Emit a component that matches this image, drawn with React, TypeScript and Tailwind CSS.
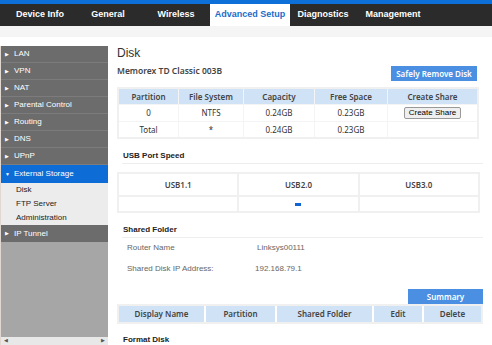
import React from "react";

const tabs = ["Device Info", "General", "Wireless", "Advanced Setup", "Diagnostics", "Management"];
const tabW = ["w-[68px]", "w-[68px]", "w-[68px]", "w-[80px]", "w-[66px]", "w-[74px]"];

const menu = ["LAN", "VPN", "NAT", "Parental Control", "Routing", "DNS", "UPnP"];

const Arrow = ({ down }: { down?: boolean }) => (
  <span className="inline-block w-[9px] text-[5px] leading-none">{down ? "▼" : "▶"}</span>
);

const App = () => {
  return (
    <div className="w-[492px] h-[345px] overflow-hidden bg-white font-['Liberation_Sans',sans-serif]">
      <div className="h-[4px] bg-[#0d6fd8]" />
      <div className="h-[22px] bg-[#2b2b2b] flex pl-[6px]">
        {tabs.map((t, i) => (
          <div
            key={t}
            className={`${tabW[i]} flex items-center justify-center text-[9px] font-bold ${
              t === "Advanced Setup" ? "bg-white text-[#1c6cc9]" : "text-white"
            }`}
          >
            {t}
          </div>
        ))}
      </div>
      <div className="h-[11px] bg-[#f5f5f5]" />
      <div className="flex pt-[9px]">
        <div className="w-[1px] shrink-0 bg-[#e0d8d0] h-[300px]" />
        <div className="w-[107px] shrink-0 h-[299px] flex flex-col bg-[#a6a6a6]">
          {menu.map((m) => (
            <div key={m} className="h-[17px] flex items-center pl-[4px] bg-[#6c6c6c] border-b border-[#7c7c7c] text-white text-[8px]">
              <Arrow />
              {m}
            </div>
          ))}
          <div className="h-[18px] flex items-center pl-[4px] bg-[#0d6cd6] text-white text-[8px]">
            <Arrow down />
            External Storage
          </div>
          <div className="bg-[#ececec] text-[#222] text-[8px] pl-[15px]">
            <div className="h-[14px] flex items-center">Disk</div>
            <div className="h-[14px] flex items-center">FTP Server</div>
            <div className="h-[14px] flex items-center">Administration</div>
          </div>
          <div className="h-[17px] flex items-center pl-[4px] bg-[#6c6c6c] text-white text-[8px]">
            <Arrow />
            IP Tunnel
          </div>
          <div className="flex-1" />
          <div className="h-[8px] bg-[#e8e8e8] flex items-center justify-between px-[3px] text-[5px] text-[#555]">
            <span>◀</span>
            <span>▶</span>
          </div>
        </div>

        <div className="flex-1 min-w-0 pl-[9px] pr-[9px] text-[#333]">
          <div className="text-[12px] leading-none mt-[1px]">Disk</div>
          <div className="flex items-end justify-between mt-[7px] pr-[6px] font-['Noto_Sans',sans-serif]">
            <div className="text-[8.5px] leading-[10px] font-semibold text-[#444] mb-[5px]">Memorex TD Classic 003B</div>
            <div className="w-[86px] h-[15px] bg-[#4a8fe2] text-white text-[8px] font-semibold flex items-center justify-center">
              Safely Remove Disk
            </div>
          </div>
          <div className="mt-[6px] w-[362px] border-2 border-[#f0f0f0] bg-[#f4f4f4] font-['Noto_Sans',sans-serif] text-[8px] text-[#333]">
            <div className="grid grid-cols-[59px_64px_70px_72px_1fr] gap-[1px]">
              {["Partition", "File System", "Capacity", "Free Space", "Create Share"].map((h) => (
                <div key={h} className="h-[15px] bg-[#cfe2f6] flex items-center justify-center font-semibold text-[#444]">
                  {h}
                </div>
              ))}
              {["0", "NTFS", "0.24GB", "0.23GB"].map((c, i) => (
                <div key={i} className="h-[16px] bg-white flex items-center justify-center">{c}</div>
              ))}
              <div className="h-[16px] bg-white flex items-center justify-center">
                <div className="border border-[#999] bg-[#efefef] rounded-[2px] px-[4px] text-[8px] leading-[10px] font-['Liberation_Sans',sans-serif] text-black">
                  Create Share
                </div>
              </div>
              {["Total", "*", "0.24GB", "0.23GB", ""].map((c, i) => (
                <div key={i} className="h-[15px] bg-white flex items-center justify-center">{c}</div>
              ))}
            </div>
          </div>

          <div className="mt-[12px] pl-[6px] text-[8px] leading-[10px] font-bold text-[#222]">USB Port Speed</div>
          <div className="mt-[2px] ml-[5px] h-[1px] bg-[#eeeeee]" />
          <div className="mt-[8px] w-[363px] border-2 border-[#f0f0f0] font-['Noto_Sans',sans-serif] text-[8px] font-semibold text-[#444]">
            <div className="grid grid-cols-3 gap-[2px] bg-[#f0f0f0]">
              {["USB1.1", "USB2.0", "USB3.0"].map((u) => (
                <div key={u} className="h-[21px] bg-white flex items-center justify-center">{u}</div>
              ))}
              <div className="h-[14px] bg-white" />
              <div className="h-[14px] bg-white flex items-center justify-center">
                <div className="w-[6px] h-[3px] bg-[#1064d4]" />
              </div>
              <div className="h-[14px] bg-white" />
            </div>
          </div>

          <div className="mt-[12px] pl-[6px] text-[8px] leading-[10px] font-bold text-[#222]">Shared Folder</div>
          <div className="mt-[2px] ml-[5px] h-[1px] bg-[#eeeeee]" />
          <div className="pl-[10px] text-[8px] leading-[10px] text-[#666]">
            <div className="flex mt-[5px]">
              <span className="w-[130px]">Router Name</span>
              <span>Linksys00111</span>
            </div>
            <div className="flex mt-[11px]">
              <span className="w-[128px]">Shared Disk IP Address:</span>
              <span>192.168.79.1</span>
            </div>
          </div>
          <div className="flex justify-end mt-[15px]">
            <div className="w-[75px] h-[15px] bg-[#4a8fe2] text-white text-[8px] font-semibold flex items-center justify-center font-['Noto_Sans',sans-serif]">
              Summary
            </div>
          </div>
          <div className="w-[366px] border-2 border-[#f0f0f0] font-['Noto_Sans',sans-serif] text-[8px] font-semibold text-[#444]">
            <div className="grid grid-cols-[85px_69px_95px_48px_1fr] gap-[2px]">
              {["Display Name", "Partition", "Shared Folder", "Edit", "Delete"].map((h) => (
                <div key={h} className="h-[16px] bg-[#cfe2f6] flex items-center justify-center">{h}</div>
              ))}
            </div>
          </div>
          <div className="mt-[11px] pl-[6px] text-[8px] leading-[10px] font-bold text-[#222]">Format Disk</div>
        </div>
      </div>
    </div>
  );
};

export default App;
